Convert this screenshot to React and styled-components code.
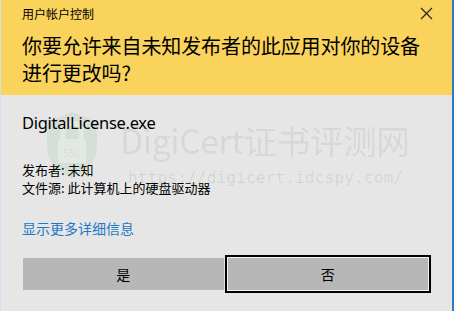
import React from "react";
import styled, { createGlobalStyle } from "styled-components";

const Global = createGlobalStyle`
  html, body { margin: 0; padding: 0; }
  body { width: 454px; height: 311px; overflow: hidden; background: #e6e6e6; }
`;

const CJK = `"Noto Sans CJK SC", "Noto Sans", sans-serif`;

const Dialog = styled.div`
  position: relative;
  width: 454px;
  height: 311px;
  box-sizing: border-box;
  background: #e6e6e6;
  border-left: 1px solid #cfe0f2;
  border-right: 2px solid #2b7cc4;
  font-family: ${CJK};
  color: #000;
  display: flex;
  flex-direction: column;
`;

const Header = styled.div`
  background: #fad35c;
  height: 95px;
  box-sizing: border-box;
  padding: 5px 16px 0 21px;
`;

const TitleRow = styled.div`
  display: flex;
  justify-content: space-between;
  align-items: center;
  height: 17px;
`;

const Title = styled.div`
  font-size: 12px;
  line-height: 17px;
`;

const Close = styled.div`
  width: 14px;
  height: 14px;
  display: flex;
  margin-right: 2px;
`;

const Heading = styled.div`
  margin-top: 10px;
  font-size: 20px;
  line-height: 27px;
  letter-spacing: -0.1px;
`;

const Body = styled.div`
  position: relative;
  z-index: 1;
  flex: 1;
  padding: 17px 21px 0 21px;
  display: flex;
  flex-direction: column;
`;

const FileName = styled.div`
  font-family: "Noto Sans", "Open Sans", sans-serif;
  font-size: 16.5px;
  line-height: 22px;
  letter-spacing: -0.3px;
`;

const Info = styled.div`
  margin-top: 27px;
  font-size: 13px;
  line-height: 18px;
`;

const Link = styled.div`
  margin-top: 21px;
  font-size: 14px;
  line-height: 20px;
  color: #1e78c8;
`;

const Buttons = styled.div`
  margin-top: 17px;
  display: flex;
  align-items: center;
  margin-left: 1px;
`;

const Button = styled.div`
  box-sizing: border-box;
  height: ${(p) => (p.$focused ? "38px" : "32px")};
  width: ${(p) => (p.$focused ? "207px" : "201px")};
  background: #b7b7b7;
  display: flex;
  align-items: center;
  justify-content: center;
  font-size: 14px;
  border: ${(p) => (p.$focused ? "2px solid #000" : "none")};
  box-shadow: ${(p) => (p.$focused ? "inset 0 0 0 1px #f2f2f2" : "none")};
  margin-left: ${(p) => (p.$focused ? "1px" : "0")};
`;

const Watermark = styled.div`
  position: absolute;
  z-index: 0;
  left: 44px;
  top: 110px;
  display: flex;
  align-items: flex-start;
  pointer-events: none;
`;

const WmText = styled.div`
  margin-left: 21px;
  padding-top: 6px;
  display: flex;
  flex-direction: column;
`;

const WmBig = styled.div`
  font-family: ${CJK};
  font-size: 33.5px;
  line-height: 48px;
  color: rgba(0, 0, 0, 0.075);
  letter-spacing: -0.3px;
  white-space: nowrap;
`;

const WmUrl = styled.div`
  margin-left: 8px;
  margin-top: 4px;
  font-family: "DejaVu Sans Mono", "Liberation Mono", monospace;
  font-size: 16px;
  line-height: 20px;
  color: rgba(0, 0, 0, 0.09);
  letter-spacing: 0.2px;
  white-space: nowrap;
`;

function Lock() {
  return (
    <svg width="54" height="70" viewBox="0 0 54 70">
      <path d="M27 2 L52 12 V36 C52 52 40 63 27 68 C14 63 2 52 2 36 V12 Z" fill="#d5dfd5" />
      <path d="M18 30 V22 a9 9 0 0 1 18 0 V30" fill="none" stroke="#e4e8e4" strokeWidth="5" />
      <rect x="13" y="29" width="28" height="24" rx="2" fill="#e4e8e4" />
      <text x="27" y="47" textAnchor="middle" fontSize="10" fontFamily="DejaVu Sans, sans-serif" fill="#d5dfd5">SSL</text>
    </svg>
  );
}

export default function App() {
  return (
    <>
      <Global />
      <Dialog>
        <Header>
          <TitleRow>
            <Title>用户帐户控制</Title>
            <Close>
              <svg width="13" height="13" viewBox="0 0 13 13">
                <path d="M1 1 L12 12 M12 1 L1 12" stroke="#222" strokeWidth="1.1" />
              </svg>
            </Close>
          </TitleRow>
          <Heading>
            你要允许来自未知发布者的此应用对你的设备
            <br />
            进行更改吗?
          </Heading>
        </Header>
        <Watermark>
          <Lock />
          <WmText>
            <WmBig>DigiCert证书评测网</WmBig>
            <WmUrl>https://digicert.idcspy.com/</WmUrl>
          </WmText>
        </Watermark>
        <Body>
          <FileName>DigitalLicense.exe</FileName>
          <Info>
            发布者: 未知
            <br />
            文件源: 此计算机上的硬盘驱动器
          </Info>
          <Link>显示更多详细信息</Link>
          <Buttons>
            <Button>是</Button>
            <Button $focused>否</Button>
          </Buttons>
        </Body>
      </Dialog>
    </>
  );
}
